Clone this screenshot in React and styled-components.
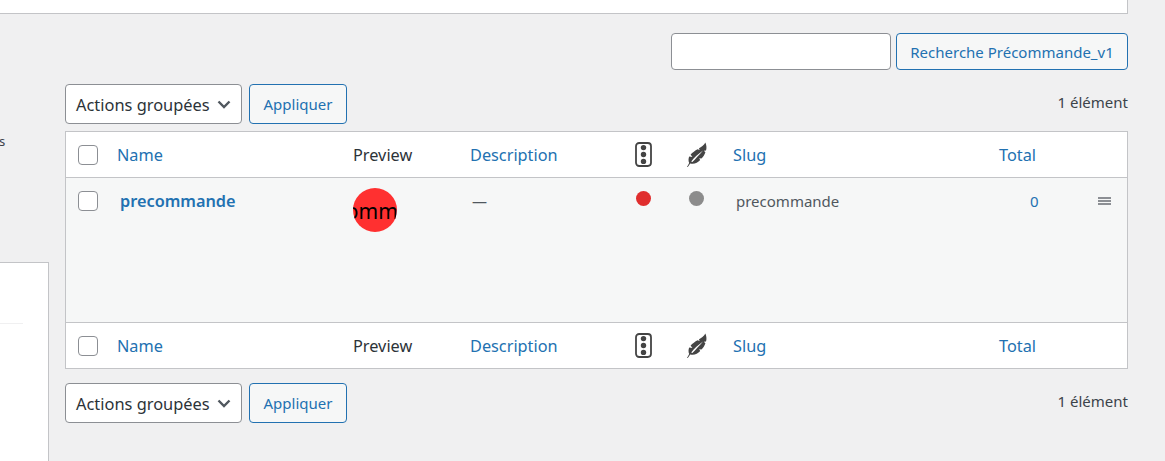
import React from "react";
import styled, { createGlobalStyle } from "styled-components";

const GlobalStyle = createGlobalStyle`
  html, body {
    margin: 0;
    padding: 0;
    background: #f0f0f1;
  }
  body {
    font-family: "Noto Sans", "Open Sans", sans-serif;
    color: #3c434a;
    overflow: hidden;
  }
`;

const Page = styled.div`
  width: 1165px;
  height: 461px;
  overflow: hidden;
  padding-right: 37px;
  box-sizing: border-box;
`;

const TopPanel = styled.div`
  height: 13px;
  background: #fff;
  border-bottom: 1px solid #c3c4c7;
  border-right: 1px solid #c3c4c7;
`;

const Columns = styled.div`
  display: flex;
  gap: 16px;
`;

const Sidebar = styled.aside`
  width: 49px;
  flex: none;
  font-size: 13px;
`;

const SideLetter = styled.div`
  height: 248px;
  padding-top: 118px;
  box-sizing: border-box;
  line-height: 18px;
  color: #3c434a;
  margin-left: -1px;
`;

const SidePanel = styled.div`
  height: 300px;
  background: #fff;
  border: 1px solid #c3c4c7;
  border-left: 0;
  box-sizing: border-box;
  padding-top: 60px;
`;

const SideRule = styled.div`
  width: 23px;
  height: 1px;
  background: #f0f0f1;
`;

const Main = styled.main`
  flex: 1;
  min-width: 0;
`;

const SearchBar = styled.form`
  display: flex;
  justify-content: flex-end;
  gap: 5px;
  margin: 19px 0 14px;
`;

const SearchInput = styled.input`
  width: 220px;
  height: 37px;
  box-sizing: border-box;
  background: #fff;
  border: 1px solid #8c8f94;
  border-radius: 4px;
`;

const Button = styled.button`
  box-sizing: border-box;
  width: ${(p) => p.$width}px;
  height: ${(p) => p.$height}px;
  padding: 0;
  background: #f6f7f7;
  border: 1px solid #2271b1;
  border-radius: 4px;
  color: #2271b1;
  font-family: inherit;
  font-size: 15px;
  white-space: nowrap;
`;

const TableNav = styled.div`
  display: flex;
  align-items: center;
  gap: 7px;
  height: 40px;
`;

const SelectBox = styled.div`
  box-sizing: border-box;
  width: 177px;
  height: 40px;
  display: flex;
  align-items: center;
  justify-content: space-between;
  padding: 0 10px 0 10px;
  background: #fff;
  border: 1px solid #8c8f94;
  border-radius: 4px;
  color: #2c3338;
  font-size: 16.4px;
  white-space: nowrap;
`;

const Count = styled.span`
  margin-left: auto;
  font-size: 15px;
  color: #3c434a;
  position: relative;
  top: -2px;
`;

const Table = styled.div`
  margin: 7px 0 14px;
  background: #fff;
  border: 1px solid #c3c4c7;
`;

const Row = styled.div`
  display: grid;
  grid-template-columns: 39px 236px 117px 163px 54px 46px 266px 83px 56px;
  height: ${(p) => p.$height}px;
  align-items: ${(p) => (p.$body ? "start" : "center")};
  background: ${(p) => (p.$body ? "#f6f7f7" : "#fff")};
  border-top: ${(p) => (p.$borderTop ? "1px solid #c3c4c7" : "0")};
  border-bottom: ${(p) => (p.$borderBottom ? "1px solid #c3c4c7" : "0")};
`;

const CheckCell = styled.div`
  display: flex;
  padding-left: 12px;
  padding-top: ${(p) => (p.$body ? "13px" : "0")};
`;

const Check = styled.span`
  display: block;
  box-sizing: border-box;
  width: 20px;
  height: 20px;
  background: #fff;
  border: 1px solid #8c8f94;
  border-radius: 4px;
`;

const HeadCell = styled.div`
  padding-left: 12px;
  font-size: 16.3px;
  color: ${(p) => (p.$plain ? "#2c3338" : "#2271b1")};
  white-space: nowrap;
`;

const IconHead = styled.div`
  padding-left: ${(p) => p.$pad}px;
  display: flex;
`;

const NameCell = styled.a`
  padding: 12px 0 0 15px;
  font-size: 16.3px;
  line-height: 22px;
  font-weight: 600;
  color: #2271b1;
`;

const PreviewCell = styled.div`
  padding: 10px 0 0 12px;
`;

const Badge = styled.div`
  width: 44px;
  height: 44px;
  border-radius: 50%;
  background: #ff3030;
  overflow: hidden;
  color: #000;
  font-size: 21px;
  line-height: 46px;
  display: flex;
  justify-content: center;
  white-space: nowrap;
`;

const BodyText = styled.div`
  padding: 13px 0 0 ${(p) => p.$pad || 15}px;
  font-size: 15px;
  line-height: 20px;
  color: ${(p) => p.$color || "#50575e"};
`;

const DotCell = styled.div`
  padding: 13px 0 0 ${(p) => p.$pad}px;
`;

const Dot = styled.span`
  display: block;
  width: 15px;
  height: 15px;
  border-radius: 50%;
  background: ${(p) => p.$color};
`;

const Handle = styled.div`
  padding: 19px 0 0 28px;
`;

const HandleBar = styled.span`
  display: block;
  width: 13px;
  height: 8px;
  background: repeating-linear-gradient(
    to bottom,
    #8c8f94 0,
    #8c8f94 2px,
    transparent 2px,
    transparent 3px
  );
`;

const LightIcon = () => (
  <svg width="17" height="25" viewBox="0 0 17 25">
    <rect x="1" y="1" width="15" height="23" rx="3.2" fill="none" stroke="#444" strokeWidth="1.8" />
    <circle cx="8.5" cy="5.6" r="2.7" fill="#444" />
    <circle cx="8.5" cy="12.5" r="2.7" fill="#444" />
    <circle cx="8.5" cy="19.4" r="2.7" fill="#444" />
  </svg>
);

const FeatherIcon = () => (
  <svg width="20" height="25" viewBox="0 0 20 25">
    <path
      fill="#444"
      fillRule="evenodd"
      d="M0 25 L2.2 21 C1.2 19.4 1.4 16.6 2.2 14.6 L5.4 15 L3.6 12.6 C5.6 10.4 8 8.6 10.6 7.2 L12.6 8 L12 6.2 C14.2 5 16.8 3.4 18.4 0.4 C19.6 3.4 19.8 6.2 19 8.6 L16.8 8.8 L18.4 10.2 C17.6 12.6 16.2 14.8 14.4 16.6 L12.2 16.2 L13.2 18 C10.6 20.8 7 22.6 3.2 21.4 L0.8 25 Z M4.2 19.4 C7.4 15.4 11 12 16 8.4 C12.2 12.8 8.8 16.4 5.4 20 Z"
    />
  </svg>
);

const Chevron = () => (
  <svg width="14" height="9" viewBox="0 0 14 9">
    <path d="M1.5 1.5 L7 7 L12.5 1.5" fill="none" stroke="#50575e" strokeWidth="2.4" />
  </svg>
);

const Nav = () => (
  <TableNav>
    <SelectBox>
      Actions groupées
      <Chevron />
    </SelectBox>
    <Button $width={98} $height={40}>Appliquer</Button>
    <Count>1 élément</Count>
  </TableNav>
);

const HeaderCells = () => (
  <>
    <CheckCell>
      <Check />
    </CheckCell>
    <HeadCell>Name</HeadCell>
    <HeadCell $plain>Preview</HeadCell>
    <HeadCell>Description</HeadCell>
    <IconHead $pad={14}>
      <LightIcon />
    </IconHead>
    <IconHead $pad={12}>
      <FeatherIcon />
    </IconHead>
    <HeadCell>Slug</HeadCell>
    <HeadCell>Total</HeadCell>
    <div />
  </>
);

export default function App() {
  return (
    <>
      <GlobalStyle />
      <Page>
        <TopPanel />
        <Columns>
          <Sidebar>
            <SideLetter>s</SideLetter>
            <SidePanel>
              <SideRule />
            </SidePanel>
          </Sidebar>
          <Main>
            <SearchBar onSubmit={(e) => e.preventDefault()}>
              <SearchInput type="text" />
              <Button type="submit" $width={232} $height={37}>
                Recherche Précommande_v1
              </Button>
            </SearchBar>
            <Nav />
            <Table>
              <Row $height={45} $borderBottom>
                <HeaderCells />
              </Row>
              <Row $height={144} $body>
                <CheckCell $body>
                  <Check />
                </CheckCell>
                <NameCell>precommande</NameCell>
                <PreviewCell>
                  <Badge>precommande</Badge>
                </PreviewCell>
                <BodyText $pad={14}>—</BodyText>
                <DotCell $pad={15}>
                  <Dot $color="#e02e2e" />
                </DotCell>
                <DotCell $pad={14}>
                  <Dot $color="#8c8c8c" />
                </DotCell>
                <BodyText>precommande</BodyText>
                <BodyText $pad={43} $color="#2271b1">0</BodyText>
                <Handle>
                  <HandleBar />
                </Handle>
              </Row>
              <Row $height={45} $borderTop>
                <HeaderCells />
              </Row>
            </Table>
            <Nav />
          </Main>
        </Columns>
      </Page>
    </>
  );
}
